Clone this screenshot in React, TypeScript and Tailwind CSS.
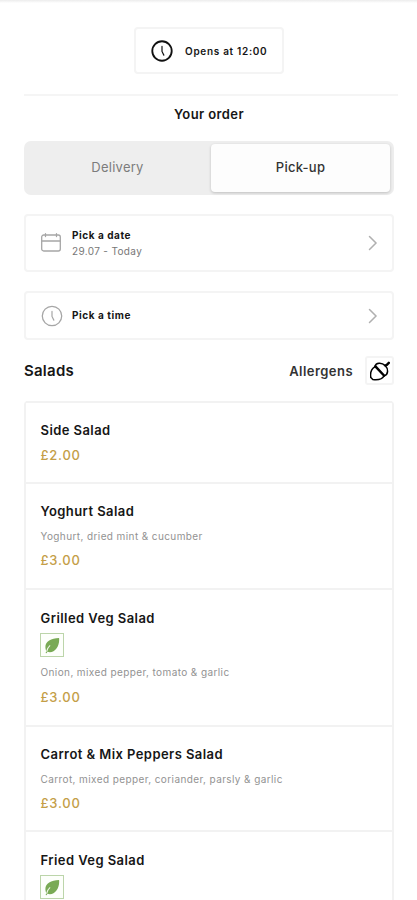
type Item = { name: string; desc?: string; veg?: boolean; price?: string; height: string };

const items: Item[] = [
  { name: "Side Salad", price: "£2.00", height: "h-[81px]" },
  { name: "Yoghurt Salad", desc: "Yoghurt, dried mint & cucumber", price: "£3.00", height: "h-[106px]" },
  { name: "Grilled Veg Salad", veg: true, desc: "Onion, mixed pepper, tomato & garlic", price: "£3.00", height: "h-[137px]" },
  { name: "Carrot & Mix Peppers Salad", desc: "Carrot, mixed pepper, coriander, parsly & garlic", price: "£3.00", height: "h-[105px]" },
  { name: "Fried Veg Salad", veg: true, height: "h-[137px]" },
];

function Clock({ className, width }: { className: string; width: number }) {
  return (
    <svg viewBox="0 0 24 24" className={className} fill="none" stroke="currentColor" strokeLinecap="round">
      <circle cx="12" cy="12" r="10.6" strokeWidth={width} />
      <path d="M12 7v5.5l2 4" strokeWidth="1.3" />
    </svg>
  );
}

function Chevron() {
  return (
    <svg viewBox="0 0 10 16" className="ml-auto h-4 w-2.5 text-[#b0b0b0]" fill="none" stroke="currentColor" strokeWidth="1.5" strokeLinecap="round">
      <path d="M1.5 1.5 8 8l-6.5 6.5" />
    </svg>
  );
}

function Calendar() {
  return (
    <svg viewBox="0 0 20 20" className="h-5 w-5 text-[#a6a6a6]" fill="none" stroke="currentColor" strokeWidth="1.3" strokeLinecap="round">
      <rect x="0.7" y="2" width="18.6" height="16" rx="2" />
      <path d="M1 8h18M4.5.7v2.8M15.5.7v2.8" />
    </svg>
  );
}

function Acorn() {
  return (
    <svg viewBox="0 0 20 20" className="h-5 w-5 text-black" fill="none" stroke="currentColor" strokeWidth="1.5" strokeLinecap="round" strokeLinejoin="round">
      <path d="M4.8 5.8C.8 8.300.2 13 .8 16.500L2.800 18.600C8 19.200 12.500 18.300 14 14.800" />
      <path d="M5 5.400C5.800 1.600 11.500 1 15.200 4.600 18.500 8 18.500 13.300 14.400 14.700" />
      <path d="M5.400 5.400 14 14.500" strokeWidth="2.500" />
      <path d="m15.300 4.500 1.500-.7 2-2" strokeWidth="2.400" />
    </svg>
  );
}

function Leaf() {
  return (
    <div className="mt-[5px] -ml-px flex h-6 w-6 shrink-0 items-center justify-center border border-[#bcd5aa] bg-[#fdfffb]">
      <svg viewBox="0 0 16 18" className="h-[17px] w-4">
        <path d="M15.5 1C7 1.5 1 4.5 1 10.5c0 2 .6 3.5 1 4.5l-.8 2 1 .3 1-1.6C10.500 18 16.500 10 15.500 1Z" fill="#79aa55" />
        <path d="M2.300 15.500C2.800 12.500 4 10.500 6 8.800" fill="none" stroke="#f0f6ea" strokeWidth="1.100" />
      </svg>
    </div>
  );
}

export default function App() {
  return (
    <div className="h-[900px] w-[417px] overflow-hidden bg-white font-['Inter','Liberation_Sans',sans-serif] text-[#161616]">
      <div className="h-[3px] bg-linear-to-b from-[#ececec] to-white" />
      <main className="ml-6 flex w-[370px] flex-col">
        <div className="mt-6 ml-[110px] flex h-[47px] w-[150px] items-center rounded-[4px] border-2 border-[#f4f4f4] pl-[15px]">
          <Clock className="h-[22px] w-[22px] text-[#111]" width={2} />
          <span className="ml-3 whitespace-nowrap pt-0.5 text-[10px] font-semibold tracking-[0.7px]">Opens at 12:00</span>
        </div>
        <div className="mt-5 h-0.5 w-[374px] bg-[#f5f5f5]" />
        <h1 className="mt-2 text-center text-[13px] leading-5 font-semibold tracking-[0.4px]">Your order</h1>
        <div className="mt-[17px] flex h-[54px] rounded-[7px] bg-[#eeeeee] py-[3px] pr-1 text-[13px] tracking-[0.25px]">
          <div className="flex w-[187px] items-center justify-center text-[#7c7c7c]">Delivery</div>
          <div className="flex flex-1 items-center justify-center rounded-[4px] bg-[#fdfdfd] font-medium text-[#333] shadow-[0_1px_3px_rgba(0,0,0,0.2)]">Pick-up</div>
        </div>
        <div className="mt-[19px] flex h-[58px] items-center rounded-[4px] border-2 border-[#f4f4f4] pr-3.5 pl-[15px]">
          <Calendar />
          <div className="ml-[11px] flex flex-col whitespace-nowrap">
            <span className="text-[10px] leading-4 font-bold tracking-[0.55px]">Pick a date</span>
            <span className="text-[10px] leading-4 tracking-[0.35px] text-[#777]">29.07 - Today</span>
          </div>
          <Chevron />
        </div>
        <div className="mt-[19px] flex h-[49px] items-center rounded-[4px] border-2 border-[#f4f4f4] pr-3.5 pl-[15px]">
          <Clock className="h-[22px] w-[22px] text-[#a6a6a6]" width={1.4} />
          <span className="ml-[9px] text-[10px] font-bold tracking-[0.55px]">Pick a time</span>
          <Chevron />
        </div>
        <div className="mt-4 flex h-[29px] items-center">
          <h2 className="pt-0.5 text-[15px] font-semibold tracking-[0.25px]">Salads</h2>
          <span className="ml-auto pt-0.5 text-[13px] font-semibold tracking-[0.45px] text-[#333]">Allergens</span>
          <div className="ml-3 flex h-[29px] w-[29px] items-center justify-center rounded-[3px] border-2 border-[#f4f4f4]">
            <Acorn />
          </div>
        </div>
        <div className="mt-4 flex flex-col rounded-t-[4px] border-x-2 border-[#f2f2f2]">
          {items.map((item) => (
            <section key={item.name} className={`${item.height} flex shrink-0 flex-col border-t-2 border-[#f2f2f2] pt-[17px] pl-[14.5px] whitespace-nowrap`}>
              <h3 className={`text-[13px] leading-5 font-semibold tracking-[0.43px] ${item.veg ? "mt-px" : ""}`}>{item.name}</h3>
              {item.veg && <Leaf />}
              {item.desc && <p className="mt-[7px] text-[10px] leading-4 tracking-[0.4px] text-[#929292]">{item.desc}</p>}
              {item.price && <p className={`text-[13px] leading-5 font-medium tracking-[0.75px] text-[#c49e47] ${item.veg ? "mt-[7px]" : item.desc ? "mt-1.5" : "mt-[5px]"}`}>{item.price}</p>}
            </section>
          ))}
        </div>
      </main>
    </div>
  );
}
